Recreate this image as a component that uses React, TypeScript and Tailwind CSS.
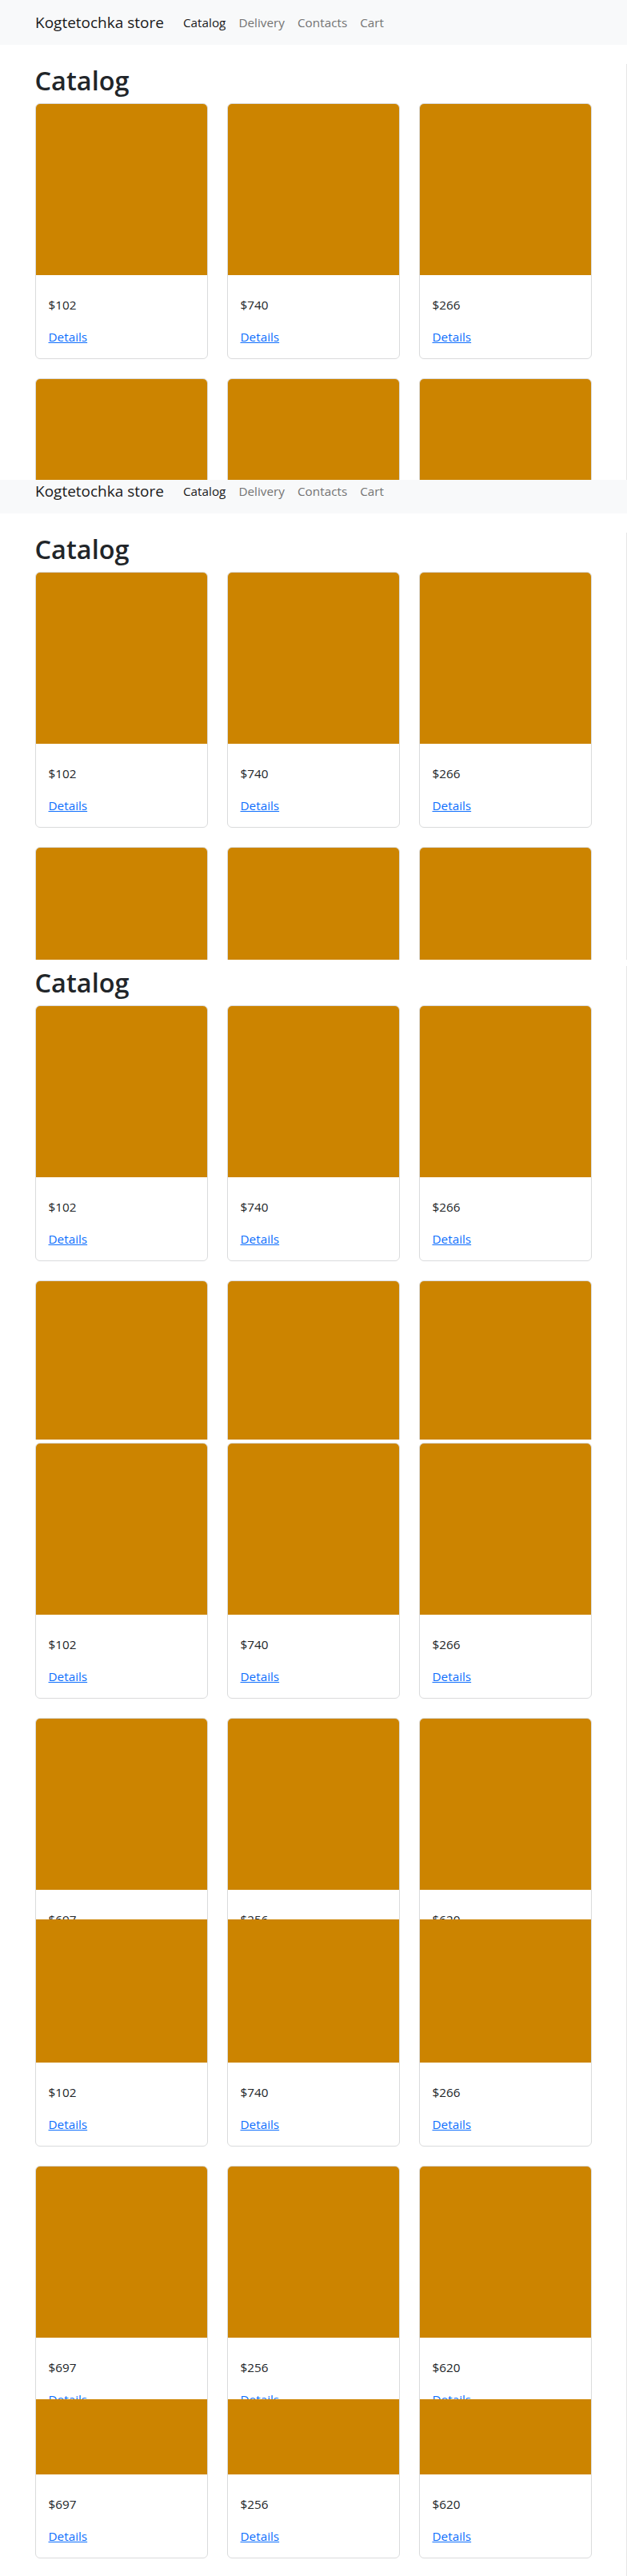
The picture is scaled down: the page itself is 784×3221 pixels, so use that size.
import React from "react";

// the reference is a scroll-stitched capture: the same page shown through
// six viewport windows, each scrolled a bit further than the last
const products = [
  { id: 1, price: 102 },
  { id: 2, price: 740 },
  { id: 3, price: 266 },
  { id: 4, price: 697 },
  { id: 5, price: 256 },
  { id: 6, price: 620 },
];

const slices = [
  { box: "h-[600px]", pull: "mt-0" },
  { box: "h-[600px]", pull: "-mt-[14px]" },
  { box: "h-[600px]", pull: "-mt-[72px]" },
  { box: "h-[600px]", pull: "-mt-[125px]" },
  { box: "h-[600px]", pull: "-mt-[165px]" },
  { box: "h-[221px]", pull: "-mt-[594px]" },
];

const Navbar = () => (
  <nav className="h-14 bg-[#f8f9fa]">
    <div className="mx-auto flex h-full w-[720px] items-center px-3">
      <a className="mr-4 text-[19px] leading-[30px] text-[#1a1a1a]">Kogtetochka store</a>
      <ul className="flex items-center">
        <li className="px-2 text-[15.3px] leading-6 text-[#1a1a1a]">Catalog</li>
        <li className="px-2 text-[15.3px] leading-6 text-[#737373]">Delivery</li>
        <li className="px-2 text-[15.3px] leading-6 text-[#737373]">Contacts</li>
        <li className="px-2 text-[15.3px] leading-6 text-[#737373]">Cart</li>
      </ul>
    </div>
  </nav>
);

const ProductCard = ({ price }: { price: number }) => (
  <div className="flex h-[320px] flex-col overflow-hidden rounded-md border border-[#dadbdc] bg-white">
    <div className="h-[214px] bg-[#cc8400]" />
    <div className="px-4 pt-[25px] pb-[15px] text-[15.3px] leading-6">
      <p className="mb-4 text-[#212529]">${price}</p>
      <a href="#" className="text-[#0d6efd] underline">
        Details
      </a>
    </div>
  </div>
);

const Page = () => (
  <div className="w-[784px] bg-white">
    <Navbar />
    <main className="border-r border-[#e6e6e6] pb-6">
      <div className="mx-auto w-[720px] px-3">
        <h1 className="mt-6 mb-2 text-[32.5px] leading-[41px] font-semibold text-[#212529]">Catalog</h1>
        <div className="grid grid-cols-3 gap-6">
          {products.map((p) => (
            <ProductCard key={p.id} price={p.price} />
          ))}
        </div>
      </div>
    </main>
  </div>
);

export default function App() {
  return (
    <div className="w-[784px] bg-white font-['Open_Sans',sans-serif]">
      {slices.map((s, i) => (
        <div key={i} className={`${s.box} overflow-hidden`}>
          <div className={s.pull}>
            <Page />
          </div>
        </div>
      ))}
    </div>
  );
}
